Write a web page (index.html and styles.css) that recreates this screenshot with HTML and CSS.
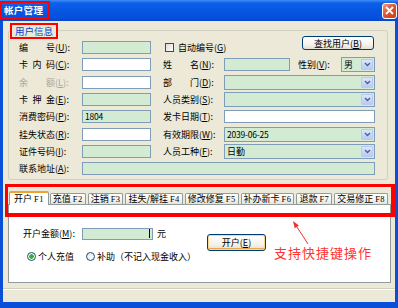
FILE: index.html
```html
<!DOCTYPE html>
<html lang="zh-CN">
<head>
  <meta charset="UTF-8" />
  <title>帐户管理</title>
  <link rel="stylesheet" href="styles.css">
</head>
<body>
  <div class="window">
    <!-- Title bar -->
    <div class="titlebar">
      <span class="title">帐户管理</span>
      <span class="close">
        <svg width="9" height="9" viewBox="0 0 9 9"><path d="M1 1L8 8M8 1L1 8" stroke="#fff" stroke-width="1.8"/></svg>
      </span>
    </div>

    <div class="client">
      <!-- 用户信息 group -->
      <div class="group">
        <div class="legend">用户信息</div>
        <div class="form">
          <label class="lbl"><span class="cn">编号</span>(<u>U</u>):</label>
          <div class="fld green"></div>
          <div class="auto">
            <span class="check"><span class="box"></span>自动编号(<u>G</u>)</span>
            <span class="btn find">查找用户(<u>B</u>)</span>
          </div>

          <label class="lbl"><span class="cn">卡内码</span>(<u>C</u>):</label>
          <div class="fld"></div>
          <label class="lbl lbl2"><span class="cn">姓名</span>(<u>N</u>):</label>
          <div class="split">
            <div class="fld green name"></div>
            <label class="lbl sex">性别(<u>V</u>):</label>
            <div class="combo"><span class="val">男</span><span class="drop"><svg width="7" height="5" viewBox="0 0 7 5"><path d="M1 1l2.5 2.5L6 1" fill="none" stroke="#4d6185" stroke-width="1.4"/></svg></span></div>
          </div>

          <label class="lbl off"><span class="cn">余额</span>(<u>L</u>):</label>
          <div class="fld"></div>
          <label class="lbl lbl2"><span class="cn">部门</span>(<u>D</u>):</label>
          <div class="combo"><span class="val"></span><span class="drop"><svg width="7" height="5" viewBox="0 0 7 5"><path d="M1 1l2.5 2.5L6 1" fill="none" stroke="#4d6185" stroke-width="1.4"/></svg></span></div>

          <label class="lbl"><span class="cn">卡押金</span>(<u>E</u>):</label>
          <div class="fld green"></div>
          <label class="lbl lbl2"><span class="cn">人员类别</span>(<u>S</u>):</label>
          <div class="combo"><span class="val"></span><span class="drop"><svg width="7" height="5" viewBox="0 0 7 5"><path d="M1 1l2.5 2.5L6 1" fill="none" stroke="#4d6185" stroke-width="1.4"/></svg></span></div>

          <label class="lbl"><span class="cn">消费密码</span>(<u>P</u>):</label>
          <div class="fld green"><span class="num">1804</span></div>
          <label class="lbl lbl2"><span class="cn">发卡日期</span>(<u>T</u>):</label>
          <div class="fld"></div>

          <label class="lbl"><span class="cn">挂失状态</span>(<u>R</u>):</label>
          <div class="fld"></div>
          <label class="lbl lbl2"><span class="cn">有效期限</span>(<u>W</u>):</label>
          <div class="combo"><span class="val num">2039-06-25</span><span class="drop"><svg width="7" height="5" viewBox="0 0 7 5"><path d="M1 1l2.5 2.5L6 1" fill="none" stroke="#4d6185" stroke-width="1.4"/></svg></span></div>

          <label class="lbl"><span class="cn">证件号码</span>(<u>I</u>):</label>
          <div class="fld green"></div>
          <label class="lbl lbl2"><span class="cn">人员工种</span>(<u>F</u>):</label>
          <div class="combo"><span class="val">日勤</span><span class="drop"><svg width="7" height="5" viewBox="0 0 7 5"><path d="M1 1l2.5 2.5L6 1" fill="none" stroke="#4d6185" stroke-width="1.4"/></svg></span></div>

          <label class="lbl"><span class="cn">联系地址</span>(<u>A</u>):</label>
          <div class="fld green wide"></div>
        </div>
      </div>

      <!-- Tabs -->
      <div class="tabs">
        <span class="tab active">开户 <span class="key">F1</span></span>
        <span class="tab">充值 <span class="key">F2</span></span>
        <span class="tab">注销 <span class="key">F3</span></span>
        <span class="tab">挂失/解挂 <span class="key">F4</span></span>
        <span class="tab">修改修复 <span class="key">F5</span></span>
        <span class="tab">补办新卡 <span class="key">F6</span></span>
        <span class="tab">退款 <span class="key">F7</span></span>
        <span class="tab">交易修正 <span class="key">F8</span></span>
      </div>
      <div class="panel">
        <div class="open-col">
          <div class="amount-row">
            <label class="lbl amount-lbl">开户金额(<u>M</u>):</label>
            <div class="fld green amount"><span class="caret"></span></div>
            <span class="unit">元</span>
          </div>
          <div class="radio-row">
            <span class="radio on"><span class="dot"></span>个人充值</span>
            <span class="radio"><span class="dot"></span>补助（不记入现金收入）</span>
          </div>
        </div>
        <span class="btn open">开户(<u>E</u>)</span>
      </div>
      <div class="status"></div>
    </div>

    <!-- Annotations -->
    <div class="mark mark-title"></div>
    <div class="mark mark-tabs"></div>
    <svg class="arrow" width="398" height="308" viewBox="0 0 398 308">
      <path d="M308 244L295 224" stroke="#f03030" stroke-width="1"/>
      <path d="M293 221L298.9 225.5L294.7 228.2Z" fill="#f03030"/>
    </svg>
    <div class="note">支持快捷键操作</div>
  </div>
</body>
</html>
```

FILE: styles.css
```css
* {
  box-sizing: border-box;
}
body {
  margin: 0;
  font-family: "Noto Sans CJK SC", "Noto Sans", sans-serif;
  font-size: 9px;
  line-height: 13px;
  color: #000;
}
u {
  text-decoration: underline;
  text-underline-offset: 1px;
}

/* Window frame */
.window {
  position: relative;
  width: 398px;
  height: 308px;
  display: flex;
  flex-direction: column;
  background: #0a4fd8;
  overflow: hidden;
}
.titlebar {
  height: 21px;
  flex: none;
  display: flex;
  align-items: center;
  justify-content: space-between;
  padding: 0 1px 0 4px;
  background: linear-gradient(#3d8ef7 0, #0d5fe8 3px, #0757e3 45%, #0650dc 85%, #0747c8 100%);
}
.title {
  color: #fff;
  font-weight: bold;
  font-size: 9.5px;
  letter-spacing: 0.3px;
}
.close {
  width: 15px;
  height: 16px;
  display: flex;
  align-items: center;
  justify-content: center;
  border: 1px solid #fff;
  border-radius: 3px;
  background: linear-gradient(135deg, #f09a7c 0, #e2562f 45%, #c93d14 100%);
}
.client {
  flex: 1;
  margin: 0 3px 6px 3px;
  background: #ece9d8;
  display: flex;
  flex-direction: column;
}

/* Group box */
.group {
  margin: 9px 7px 0 5px;
  border: 1px solid #d0d0bf;
  border-radius: 3px;
  padding: 0 12px 2px 10px;
}
.legend {
  width: fit-content;
  margin: -8px 0 0 -9px;
  padding: 0 3px;
  height: 16px;
  line-height: 12px;
  border: 2px solid #f00;
  background: #ece9d8;
  color: #0046d5;
  font-size: 9.5px;
}
.form {
  margin-top: 0;
  display: grid;
  grid-template-columns: 63px 69px 12px 61px 1fr;
  grid-auto-rows: 17.3px;
  align-items: center;
}
.lbl {
  white-space: nowrap;
  line-height: 13px;
}
.lbl2 {
  grid-column: 4;
}
.off {
  color: #aca899;
}
.cn {
  display: inline-block;
  width: 36px;
  text-align: justify;
  text-align-last: justify;
  vertical-align: top;
}
.fld {
  height: 13px;
  border: 1px solid #7f9db9;
  background: #fff;
  display: flex;
  align-items: center;
  padding-left: 2px;
}
.green {
  background: #d3ebd3;
}
.wide {
  grid-column: 2 / 6;
}
.num {
  font-size: 8.5px;
  letter-spacing: -0.2px;
}
.auto {
  grid-column: 4 / 6;
  align-self: stretch;
  display: flex;
  align-items: center;
  justify-content: space-between;
}
.check {
  display: flex;
  align-items: center;
  margin-left: 2px;
}
.check .box {
  width: 9px;
  height: 9px;
  margin-right: 4px;
  border: 1px solid #1c5180;
  background: linear-gradient(135deg, #dcdcd7, #fff);
}
.btn {
  display: flex;
  align-items: center;
  justify-content: center;
  border: 1px solid #003c74;
  border-radius: 3px;
  background: linear-gradient(#fff 0, #f4f3ee 60%, #e3e0d3 100%);
  white-space: nowrap;
}
.find {
  width: 72px;
  height: 14px;
  align-self: flex-start;
  margin-top: -3px;
  margin-right: 1px;
}
.split {
  display: flex;
  align-items: center;
}
.name {
  width: 66px;
}
.sex {
  width: 43px;
  margin-left: 8px;
}
.combo {
  flex: 1;
  height: 15px;
  display: flex;
  border: 1px solid #7f9db9;
  background: #d3ebd3;
}
.combo .val {
  flex: 1;
  padding-left: 2px;
  line-height: 13px;
}
.drop {
  width: 12px;
  margin: 1px;
  display: flex;
  align-items: center;
  justify-content: center;
  border-radius: 1px;
  background: linear-gradient(#dce6fb, #b7cbf6);
  border: 1px solid #b9c9ef;
}

/* Tabs */
.tabs {
  height: 13px;
  margin: 11px 0 0 6px;
  display: flex;
  align-items: flex-end;
  position: relative;
  z-index: 1;
}
.tab {
  height: 11px;
  line-height: 10px;
  padding: 0 2px;
  margin-left: 2px;
  border: 1px solid #919b9c;
  border-bottom: none;
  border-radius: 2px 2px 0 0;
  background: linear-gradient(#fff, #f3f3ef 60%, #e4e2d9);
  white-space: nowrap;
}
.tab.active {
  height: 14px;
  margin: 0 -1px -1px 0;
  padding: 0 4px;
  line-height: 12px;
  background: #fff;
  border-top: 2px solid #f0a132;
}
.key {
  font-family: "Liberation Serif", serif;
  font-size: 8.5px;
  letter-spacing: 0.4px;
}

/* Tab page */
.panel {
  height: 79px;
  margin: 0 4px 0 5px;
  border: 1px solid #919b9c;
  background: #fff;
  padding: 22px 0 0 14px;
  display: flex;
  align-items: flex-start;
}
.open-col {
  width: 184px;
  flex: none;
}
.amount-row {
  display: flex;
  align-items: center;
}
.amount-lbl {
  width: 59px;
}
.amount {
  width: 71px;
  height: 12px;
  justify-content: flex-end;
  padding-right: 2px;
}
.caret {
  width: 1px;
  height: 9px;
  background: #000;
}
.unit {
  margin-left: 4px;
}
.radio-row {
  margin-top: 10px;
  padding-left: 4px;
  display: flex;
  gap: 12px;
  white-space: nowrap;
}
.radio {
  flex: none;
  display: flex;
  align-items: center;
}
.radio .dot {
  width: 9px;
  height: 9px;
  margin-right: 2px;
  border: 1px solid #1c5180;
  border-radius: 50%;
  background: radial-gradient(circle at 60% 60%, #fff, #dcdcd7);
}
.radio.on .dot {
  background: radial-gradient(circle, #2cb52c 0, #2cb52c 2px, #fff 2.5px, #e5e5e0 100%);
}
.open {
  width: 59px;
  height: 17px;
  margin-top: 7px;
  box-shadow: inset 0 0 0 1px #fcd690, inset 0 -1px 0 1px #eba84a;
}
.status {
  flex: 1;
  margin-top: 5px;
  border-top: 1px solid #d2cebd;
  box-shadow: inset 0 1px 0 #fff;
}

/* Red annotations drawn over the screenshot */
.mark {
  position: absolute;
  border: 3px solid #f00;
  z-index: 2;
}
.mark-title {
  left: 0;
  top: 1px;
  width: 50px;
  height: 18px;
  border-width: 2px;
}
.mark-tabs {
  left: 5px;
  top: 184px;
  width: 390px;
  height: 33px;
  border-width: 3px 4px 4px 3px;
}
.arrow {
  position: absolute;
  left: 0;
  top: 0;
  z-index: 2;
}
.note {
  position: absolute;
  left: 274px;
  top: 245px;
  font-size: 13px;
  line-height: 16px;
  letter-spacing: 1px;
  color: #f33;
  z-index: 2;
}
```
